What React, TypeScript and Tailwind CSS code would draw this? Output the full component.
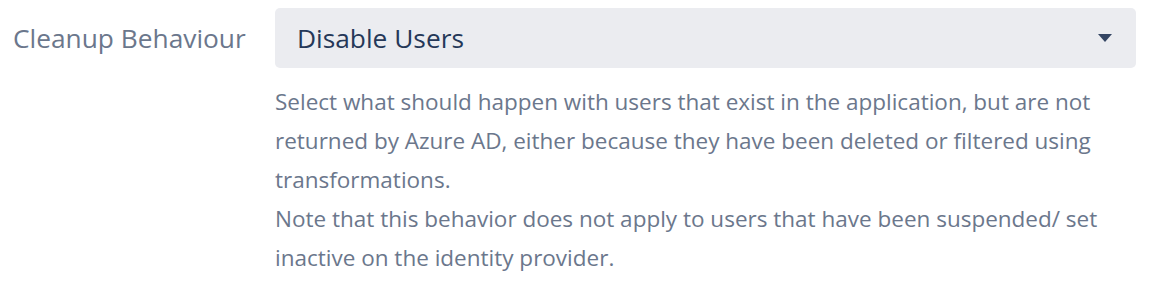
export default function App() {
  return (
    <div
      className="flex h-[289px] w-[1150px] items-start bg-white text-[#6b778c]"
      style={{ fontFamily: '"Open Sans", "Noto Sans", sans-serif' }}
    >
      <label className="w-[275px] shrink-0 pl-[13px] pt-[20px] text-[26.3px] leading-[36px]">
        Cleanup Behaviour
      </label>
      <div className="flex w-[861px] flex-col">
        <button
          type="button"
          className="mt-[8px] flex h-[60px] w-full items-center justify-between rounded-[5px] bg-[#ebecf0] pl-[22px] pr-[24px] text-left text-[26.3px] text-[#253858]"
        >
          <span className="pt-[1px]">Disable Users</span>
          <svg width="14" height="8" viewBox="0 0 14 8" className="text-[#344563]">
            <path d="M0 0h14L7 8z" fill="currentColor" />
          </svg>
        </button>
        <p className="mt-[14px] text-[22.5px] leading-[39px]">
          Select what should happen with users that exist in the application, but are not
          returned by Azure AD, either because they have been deleted or filtered using
          transformations.
          <br />
          Note that this behavior does not apply to users that have been suspended/ set
          inactive on the identity provider.
        </p>
      </div>
    </div>
  );
}
